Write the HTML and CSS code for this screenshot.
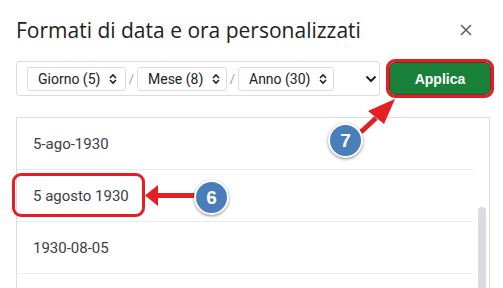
FILE: index.html
```html
<!DOCTYPE html>
<html lang="it">
<head>
<meta charset="utf-8">
<title>Formati di data e ora personalizzati</title>
<link rel="stylesheet" href="styles.css">
</head>
<body>
<div class="dialog">
  <div class="header">
    <h1 class="title">Formati di data e ora personalizzati</h1>
    <button class="close" aria-label="Chiudi">
      <svg width="12" height="12" viewBox="0 0 12 12"><path d="M1 1L11 11M11 1L1 11" stroke="#5f6368" stroke-width="1.6" fill="none"/></svg>
    </button>
  </div>
  <div class="toolbar">
    <div class="format-box">
      <span class="chip c1">Giorno (5)<svg class="updown" width="8" height="12" viewBox="0 0 8 12"><path d="M1 5L4 2L7 5M1 7L4 10L7 7" stroke="#202124" stroke-width="1.6" fill="none"/></svg></span>
      <span class="sep">/</span>
      <span class="chip c2">Mese (8)<svg class="updown" width="8" height="12" viewBox="0 0 8 12"><path d="M1 5L4 2L7 5M1 7L4 10L7 7" stroke="#202124" stroke-width="1.6" fill="none"/></svg></span>
      <span class="sep">/</span>
      <span class="chip c3">Anno (30)<svg class="updown" width="8" height="12" viewBox="0 0 8 12"><path d="M1 5L4 2L7 5M1 7L4 10L7 7" stroke="#202124" stroke-width="1.6" fill="none"/></svg></span>
      <svg class="chevron" width="12" height="8" viewBox="0 0 12 8"><path d="M1.5 1.5L6 6L10.5 1.5" stroke="#202124" stroke-width="2" fill="none"/></svg>
    </div>
    <button class="apply">Applica</button>
  </div>
  <div class="list">
    <div class="rows">
      <div class="row">5-ago-1930</div>
      <div class="row">5 agosto 1930</div>
      <div class="row">1930-08-05</div>
      <div class="row"></div>
    </div>
    <div class="scrollbar"><div class="thumb"></div></div>
  </div>
</div>

<div class="mark-box"></div>
<svg class="arrows" width="503" height="288" viewBox="0 0 503 288">
  <path d="M196 195.5H156" stroke="#e31e24" stroke-width="5" fill="none"/>
  <path d="M145 195.5L158 185V206Z" fill="#e31e24"/>
  <path d="M361 132L376 118" stroke="#e31e24" stroke-width="5" fill="none"/>
  <path d="M395 99L368 111L384 124Z" fill="#e31e24"/>
</svg>
<div class="badge b6">6</div>
<div class="badge b7">7</div>
</body>
</html>
```
FILE: styles.css
```css
* { box-sizing: border-box; }
html, body { margin: 0; padding: 0; background: #fff; }
body {
  width: 503px;
  height: 288px;
  overflow: hidden;
  position: relative;
  font-family: Roboto, "Liberation Sans", sans-serif;
  color: #3c4043;
}
.dialog { padding: 0 10px 0 16px; }
.header {
  height: 60px;
  display: flex;
  align-items: center;
  justify-content: space-between;
}
.title {
  margin: 0;
  font-family: "Open Sans", Roboto, sans-serif;
  font-weight: 400;
  font-size: 21px;
  color: #202124;
}
.close {
  border: 0;
  background: none;
  padding: 0;
  width: 20px;
  height: 20px;
  display: flex;
  align-items: center;
  justify-content: center;
  margin-right: 17px;
}
.toolbar {
  display: flex;
  align-items: center;
  gap: 10px;
  margin-top: 1px;
}
.format-box {
  flex: none;
  width: 364px;
  height: 35px;
  border: 1px solid #dadce0;
  border-radius: 3px;
  display: flex;
  align-items: center;
  padding: 0 0 0 10px;
}
.chip {
  flex: none;
  height: 24px;
  border: 1px solid #dadce0;
  border-radius: 3px;
  display: flex;
  align-items: center;
  gap: 9px;
  white-space: nowrap;
  padding: 0 0 0 10px;
  font-size: 14px;
  color: #202124;
}
.c1 { width: 99px; }
.c2 { width: 90px; }
.c3 { width: 96px; }
.updown { flex: none; }
.sep {
  flex: none;
  width: 11px;
  text-align: center;
  font-size: 13px;
  color: #9aa0a6;
}
.chevron { margin-left: auto; margin-right: 2px; }
.apply {
  flex: none;
  width: 100px;
  height: 31px;
  background: #188038;
  color: #fff;
  border: 0;
  border-radius: 5px;
  font-family: "Liberation Sans", Arial, sans-serif;
  font-weight: 700;
  font-size: 14px;
  outline: 3px solid #e31e24;
  outline-offset: 1px;
  box-shadow: 0 0 0 1px #7a2a2a;
}
.list {
  margin-top: 21px;
  width: 474px;
  height: 171px;
  border: 1px solid #dadce0;
  border-bottom: 0;
  display: flex;
  gap: 5px;
  overflow: hidden;
}
.rows { flex: 1; }
.row {
  height: 52px;
  border-bottom: 1px solid #e8eaed;
  display: flex;
  align-items: center;
  padding-left: 16px;
  font-size: 15px;
  color: #3c4043;
}
.scrollbar { width: 8px; margin-right: 3px; padding-top: 89px; }
.thumb { height: 82px; background: #dadce0; border-radius: 4px 4px 0 0; }

.mark-box {
  position: absolute;
  left: 12px;
  top: 173px;
  width: 133px;
  height: 44px;
  border: 3.5px solid #e31e24;
  border-radius: 9px;
}
.arrows { position: absolute; left: 0; top: 0; }
.badge {
  position: absolute;
  width: 35px;
  height: 35px;
  border-radius: 50%;
  background: #4a7ebb;
  border: 2px solid #fff;
  box-shadow: 0 1px 3px rgba(0,0,0,0.45);
  color: #fff;
  font-family: "Liberation Sans", Arial, sans-serif;
  font-weight: 700;
  font-size: 19px;
  display: flex;
  align-items: center;
  justify-content: center;
}
.b6 { left: 194px; top: 180px; }
.b7 { left: 328px; top: 123px; }
```
